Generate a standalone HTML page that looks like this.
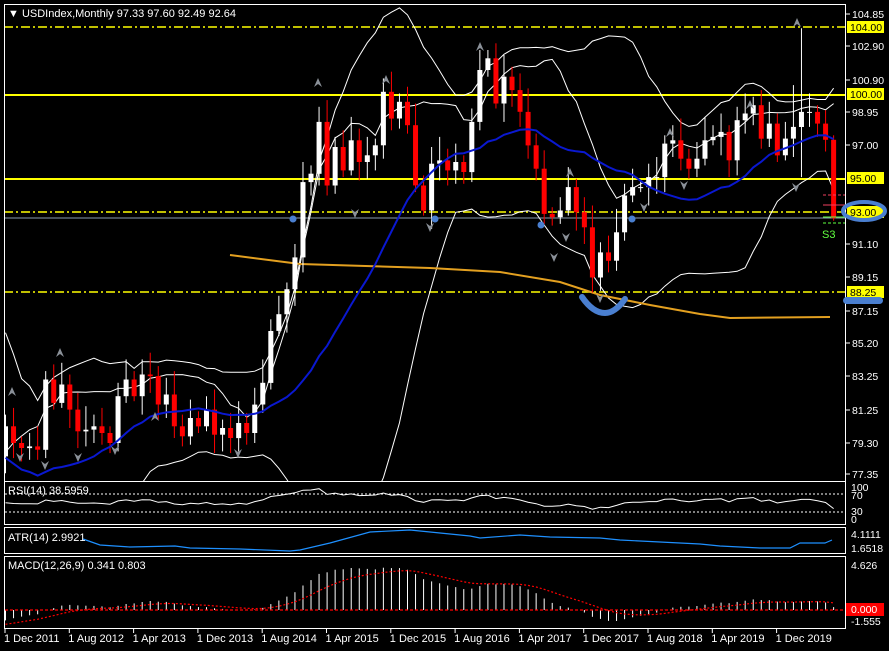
<!DOCTYPE html>
<html><head><meta charset="utf-8">
<style>
html,body{margin:0;padding:0;background:#000;width:889px;height:651px;overflow:hidden}
svg{display:block}
text{font-family:"Liberation Sans",sans-serif;font-size:11px}
text.ax{font-size:10.5px}
</style></head>
<body>
<svg id="s" width="889" height="651" xmlns="http://www.w3.org/2000/svg">
<defs><clipPath id="cm"><rect x="5" y="5" width="840" height="476"/></clipPath></defs>
<rect width="889" height="651" fill="#000"/>
<g id="g"></g>
</svg>
<script>
var pre=[81.9,86.3,86.0,81.8,83.1,78.5,77.3,81.2,79.0,77.2,76.6,75.9,72.9,74.6,74.3,74.2,74.1,78.5,76.3,78.4];
var c=[80.2,
79.2,78.9,79.0,78.8,83.0,81.6,82.7,81.2,79.9,80.0,80.2,79.8,
79.2,82.0,83.0,82.0,83.3,83.2,81.5,82.1,80.2,79.6,80.7,80.2,
81.2,79.7,80.1,79.5,80.4,79.8,81.5,82.8,85.9,86.9,88.4,90.3,
94.8,95.3,98.4,94.6,96.9,95.5,97.3,96.0,96.4,97.0,100.2,98.6,
99.6,98.2,94.6,93.1,95.9,96.1,95.5,96.0,95.4,98.4,101.5,102.2,
99.5,101.1,100.3,99.0,97.0,95.6,92.9,92.7,93.1,94.5,93.0,92.1,
89.1,90.6,90.1,91.8,94.0,94.5,94.5,95.1,95.1,97.1,97.3,96.2,
95.6,96.2,97.3,97.5,97.8,96.1,98.5,98.9,99.4,97.4,98.3,96.4,
97.4,98.1,99.0,99.0,98.3,97.33,92.64];
var all=pre.concat(c),P=pre.length;
function Y(p){return 14+(104.85-p)*16.727}
function X(i){return 5.5+i*8.04}
var h='',N=c.length;
function L(x1,y1,x2,y2,col,w,da){h+='<line x1="'+x1+'" y1="'+y1+'" x2="'+x2+'" y2="'+y2+'" stroke="'+col+'" stroke-width="'+(w||1)+'"'+(da?' stroke-dasharray="'+da+'"':'')+'/>';}
function poly(pts,col,w,da){h+='<polyline fill="none" points="'+pts.join(' ')+'" stroke="'+col+'" stroke-width="'+(w||1)+'"'+(da?' stroke-dasharray="'+da+'"':'')+'/>';}
function T(x,y,t,col,cls){h+='<text x="'+x+'" y="'+y+'" fill="'+(col||'#fff')+'"'+(cls?' class="'+cls+'"':'')+'>'+t+'</text>';}
var hi=[],lo=[];
for(var k=0;k<all.length;k++){var o=k?all[k-1]:all[k];var cc=all[k];var r=0.4+((k*37)%11)/10;hi.push(Math.max(o,cc)+r);lo.push(Math.min(o,cc)-(0.3+((k*53)%9)/10));}
var last=all.length-1;hi[last]=97.6;lo[last]=92.49;
hi[P+99]=104.0;hi[P+98]=100.6;lo[P+99]=95.1;
L(4,27,846,27,'#ff0',1.5,'9 3 2 3');
L(4,95,846,95,'#ff0',2);
L(4,179,846,179,'#ff0',2);
L(4,212,846,212,'#ff0',1.5,'9 3 2 3');
L(4,292,846,292,'#ff0',1.5,'9 3 2 3');
L(4,218,846,218,'#8a9cb0',1);
h+='<g clip-path="url(#cm)">';
var up=[],dn=[],ma=[];
for(var i=0;i<N;i++){var j=i+P,s=0,q=0;for(var m=j-19;m<=j;m++){s+=all[m];}var mu=s/20;for(m=j-19;m<=j;m++)q+=(all[m]-mu)*(all[m]-mu);var sd=Math.sqrt(q/20);
up.push(X(i)+','+Y(mu+2*sd).toFixed(1));dn.push(X(i)+','+Y(mu-2*sd).toFixed(1));
ma.push(X(i)+','+Y(mu).toFixed(1));}
var wm=[];for(i=0;i<N;i++){var j2=i+P,s3=0;for(m=j2-9;m<=j2;m++)s3+=all[m];var mu3=s3/10,q3=0;for(m=j2-9;m<=j2;m++)q3+=(all[m]-mu3)*(all[m]-mu3);wm.push(X(i)+','+Y(mu3+1.2*Math.sqrt(q3/10)).toFixed(1));}
poly(up,'#fff',1);poly(dn,'#fff',1);poly(wm,'#fff',1);
poly(['230,255','300,264','430,268','500,272','560,282','600,295','650,305','700,314','730,318','830,317'],'#e3a020',2);
for(i=0;i<N;i++){var j=i+P,o=all[j-1],cc=all[j],x=X(i);var col=cc>=o?'#fff':'#f00';
L(x,Y(hi[j]).toFixed(1),x,Y(lo[j]).toFixed(1),col,1);
var yt=Y(Math.max(o,cc)),yb=Y(Math.min(o,cc));h+='<rect x="'+(x-2.5)+'" y="'+yt.toFixed(1)+'" width="5" height="'+Math.max(1,yb-yt).toFixed(1)+'" fill="'+col+'"/>';}
poly(ma,'#0a18d0',2);
var fu=[[12,387],[60,348],[155,412],[318,78],[386,75],[480,42],[570,168],[797,18],[670,128],[750,100]];
fu.forEach(function(a){h+='<path d="M'+a[0]+' '+a[1]+' l-4 9 l4 -3 l4 3z" fill="#8a9098"/>';});
var fd=[[20,462],[45,470],[78,462],[115,455],[238,458],[355,218],[430,232],[566,242],[600,303],[684,190],[796,192],[554,262],[644,212]];
fd.forEach(function(a){h+='<path d="M'+a[0]+' '+a[1]+' l-4 -9 l4 3 l4 -3z" fill="#8a9098"/>';});
h+='</g>';
[[293,219],[435,219],[541,225],[632,219]].forEach(function(a){h+='<circle cx="'+a[0]+'" cy="'+a[1]+'" r="3.5" fill="#4a7fd0"/>';});
h+='<path d="M582 297 Q593 313 605 313 Q615 313 625 299" fill="none" stroke="#4a7fd0" stroke-width="6" stroke-linecap="round"/>';
L(823,195,846,195,'#f04060',1,'3 2');L(823,205,846,205,'#f04060',1);L(823,217,846,217,'#60ff40',1);L(823,223,846,223,'#60ff40',1,'3 2');
T(822,238,'S3','#60ff40');
h+='<rect x="4.5" y="4.5" width="841" height="477" fill="none" stroke="#fff"/>';
T(8,17,'▼ USDIndex,Monthly  97.33 97.60 92.49 92.64','#fff');
var ax=[[104.85,14],[102.90,46],[100.90,80],[98.95,112],[97.00,145],[91.10,244],[89.15,277],[87.15,311],[85.20,343],[83.25,376],[81.25,410],[79.30,443],[77.35,474]];
ax.forEach(function(a){L(846,a[1],850,a[1],'#fff');T(852,a[1]+4,a[0].toFixed(2),'#fff','ax');});
[[104,27],[100,94],[95,178],[93,212],[88.25,292]].forEach(function(a){h+='<rect x="847" y="'+(a[1]-6)+'" width="37" height="12" fill="#ff0"/>';T(850,a[1]+4,a[0].toFixed(2),'#000','ax');});
h+='<ellipse cx="864" cy="211" rx="21" ry="9" fill="none" stroke="#4a7fd0" stroke-width="4"/>';
h+='<rect x="843" y="297" width="40" height="7" rx="3.5" fill="#4a7fd0"/>';
// RSI
h+='<rect x="4.5" y="481.5" width="841" height="43" fill="none" stroke="#fff"/>';
L(5,494,845,494,'#fff',1,'2 2');L(5,512,845,512,'#fff',1,'2 2');
var ag=0,al=0,rs=[];for(k=1;k<all.length;k++){var d=all[k]-all[k-1];var g=d>0?d:0,l2=d<0?-d:0;if(k<=14){ag+=g/14;al+=l2/14;}else{ag=(ag*13+g)/14;al=(al*13+l2)/14;}if(k>=P){var r=al==0?100:100-100/(1+ag/al);rs.push(X(k-P)+','+(525.5-r*0.45).toFixed(1));}}
poly(rs,'#fff',1);
T(8,494,'RSI(14) 38.5959');T(851,491,'100','#fff','ax');T(851,499,'70','#fff','ax');T(851,515,'30','#fff','ax');T(851,523,'0','#fff','ax');
// ATR
h+='<rect x="4.5" y="527.5" width="841" height="26" fill="none" stroke="#fff"/>';
poly(['83,539','100,545','130,547','175,546','190,548','240,549','290,551','300,550','330,543','370,532','410,530','430,532','470,536','480,538','520,535','550,537','600,538','620,540','660,542','700,544','720,546','760,548','790,548','800,543','825,543','832,540'],'#1e90ff',1.2);
T(8,541,'ATR(14) 2.9921');T(851,538,'4.1111','#fff','ax');T(851,552,'1.6518','#fff','ax');
// MACD
h+='<rect x="4.5" y="556.5" width="841" height="72" fill="none" stroke="#fff"/>';
var e12=all[0],e26=all[0],sg=0,sl=[];
for(k=0;k<all.length;k++){e12=e12+(all[k]-e12)*2/13;e26=e26+(all[k]-e26)*2/27;var mv=e12-e26;sg=sg+(mv-sg)*0.2;
if(k>=P){var x=X(k-P);L(x,610,x,(610-mv*9.73).toFixed(1),'#fff',1);sl.push(x+','+(610-sg*9.73).toFixed(1));}}
L(5,610,845,610,'#f00',1.2,'3 2');
poly(sl,'#f00',1.2,'2 2');
T(8,569,'MACD(12,26,9) 0.341 0.803');T(851,569,'4.626','#fff','ax');
h+='<rect x="846" y="603" width="38" height="13" fill="#f00"/>';T(851,613,'0.000','#fff','ax');T(851,625,'-1.555','#fff','ax');
var dt=['1 Dec 2011','1 Aug 2012','1 Apr 2013','1 Dec 2013','1 Aug 2014','1 Apr 2015','1 Dec 2015','1 Aug 2016','1 Apr 2017','1 Dec 2017','1 Aug 2018','1 Apr 2019','1 Dec 2019'];
dt.forEach(function(s,n){var x=5+n*64.3;L(x,629,x,633,'#fff');T(x-1,642,s);});
document.getElementById('g').innerHTML=h;
</script>
</body></html>
